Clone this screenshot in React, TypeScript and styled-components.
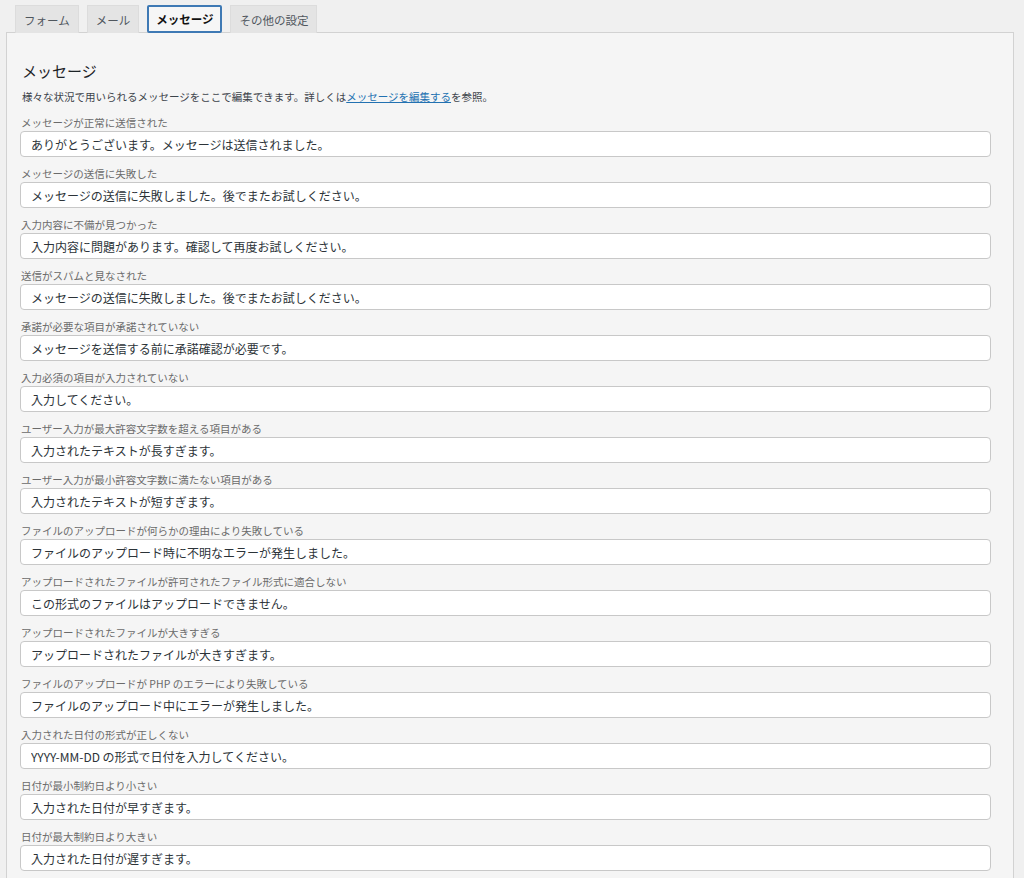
import React, { FC } from 'react';
import styled, { createGlobalStyle } from 'styled-components';

const GlobalStyle = createGlobalStyle`
  body {
    margin: 0;
    background: #f0f0f0;
    font-family: "Noto Sans CJK JP", "Noto Sans", sans-serif;
    color: #2c3338;
  }
`;

const Page = styled.div`
  padding-top: 5px;
`;

const Tabs = styled.div`
  display: flex;
  gap: 8px;
  padding-left: 15px;
  position: relative;
  z-index: 1;
  margin-bottom: -1px;
`;

const Tab = styled.div<{ active?: boolean }>`
  box-sizing: border-box;
  height: 28px;
  padding: 0 ${(p) => (p.active ? '7px' : '8px')};
  display: flex;
  align-items: center;
  font-size: 11.5px;
  color: ${(p) => (p.active ? '#111' : '#50575e')};
  font-weight: ${(p) => (p.active ? 700 : 400)};
  background: ${(p) => (p.active ? '#f6f6f6' : '#e4e4e4')};
  border: ${(p) => (p.active ? '2px solid #3e79b4' : '1px solid #dcdcdc')};
  border-bottom: ${(p) => (p.active ? '2px solid #3e79b4' : 'none')};
  border-radius: ${(p) => (p.active ? '2px' : '0')};
`;

const Panel = styled.div`
  margin: 0 10px 0 6px;
  background: #f5f5f5;
  border: 1px solid #d2d2d2;
  padding: 28px 22px 20px 13px;
`;

const Heading = styled.h2`
  margin: 0 0 8px 2px;
  font-size: 15px;
  line-height: 20px;
  font-weight: 400;
  color: #1d2327;
`;

const Description = styled.p`
  margin: 0 0 11px 2px;
  font-size: 10.5px;
  line-height: 16px;
  color: #3c434a;
`;

const DocLink = styled.a`
  color: #2271b1;
  text-decoration: underline;
`;

const Field = styled.div`
  display: flex;
  flex-direction: column;
  gap: 1px;
  margin-bottom: 10px;
`;

const Label = styled.label`
  font-size: 10.5px;
  line-height: 14px;
  color: #6b6b6b;
  padding-left: 1px;
`;

const Input = styled.input`
  box-sizing: border-box;
  width: 100%;
  height: 26px;
  padding: 0 10px;
  font-family: inherit;
  font-size: 12px;
  color: #2c3338;
  background: #fff;
  border: 1px solid #c8c8c8;
  border-radius: 4px;
  outline: none;
`;

const messages: [string, string][] = [
  ['メッセージが正常に送信された', 'ありがとうございます。メッセージは送信されました。'],
  ['メッセージの送信に失敗した', 'メッセージの送信に失敗しました。後でまたお試しください。'],
  ['入力内容に不備が見つかった', '入力内容に問題があります。確認して再度お試しください。'],
  ['送信がスパムと見なされた', 'メッセージの送信に失敗しました。後でまたお試しください。'],
  ['承諾が必要な項目が承諾されていない', 'メッセージを送信する前に承諾確認が必要です。'],
  ['入力必須の項目が入力されていない', '入力してください。'],
  ['ユーザー入力が最大許容文字数を超える項目がある', '入力されたテキストが長すぎます。'],
  ['ユーザー入力が最小許容文字数に満たない項目がある', '入力されたテキストが短すぎます。'],
  ['ファイルのアップロードが何らかの理由により失敗している', 'ファイルのアップロード時に不明なエラーが発生しました。'],
  ['アップロードされたファイルが許可されたファイル形式に適合しない', 'この形式のファイルはアップロードできません。'],
  ['アップロードされたファイルが大きすぎる', 'アップロードされたファイルが大きすぎます。'],
  ['ファイルのアップロードが PHP のエラーにより失敗している', 'ファイルのアップロード中にエラーが発生しました。'],
  ['入力された日付の形式が正しくない', 'YYYY-MM-DD の形式で日付を入力してください。'],
  ['日付が最小制約日より小さい', '入力された日付が早すぎます。'],
  ['日付が最大制約日より大きい', '入力された日付が遅すぎます。'],
];

const tabs = ['フォーム', 'メール', 'メッセージ', 'その他の設定'];

const App: FC = () => {
  return (
    <>
      <GlobalStyle />
      <Page>
        <Tabs>
          {tabs.map((t) => (
            <Tab key={t} active={t === 'メッセージ'}>
              {t}
            </Tab>
          ))}
        </Tabs>
        <Panel>
          <Heading>メッセージ</Heading>
          <Description>
            様々な状況で用いられるメッセージをここで編集できます。詳しくは
            <DocLink href="#">メッセージを編集する</DocLink>を参照。
          </Description>
          {messages.map(([label, value], i) => (
            <Field key={`msg-${i}`}>
              <Label>{label}</Label>
              <Input defaultValue={value} />
            </Field>
          ))}
        </Panel>
      </Page>
    </>
  );
};

export default App;
